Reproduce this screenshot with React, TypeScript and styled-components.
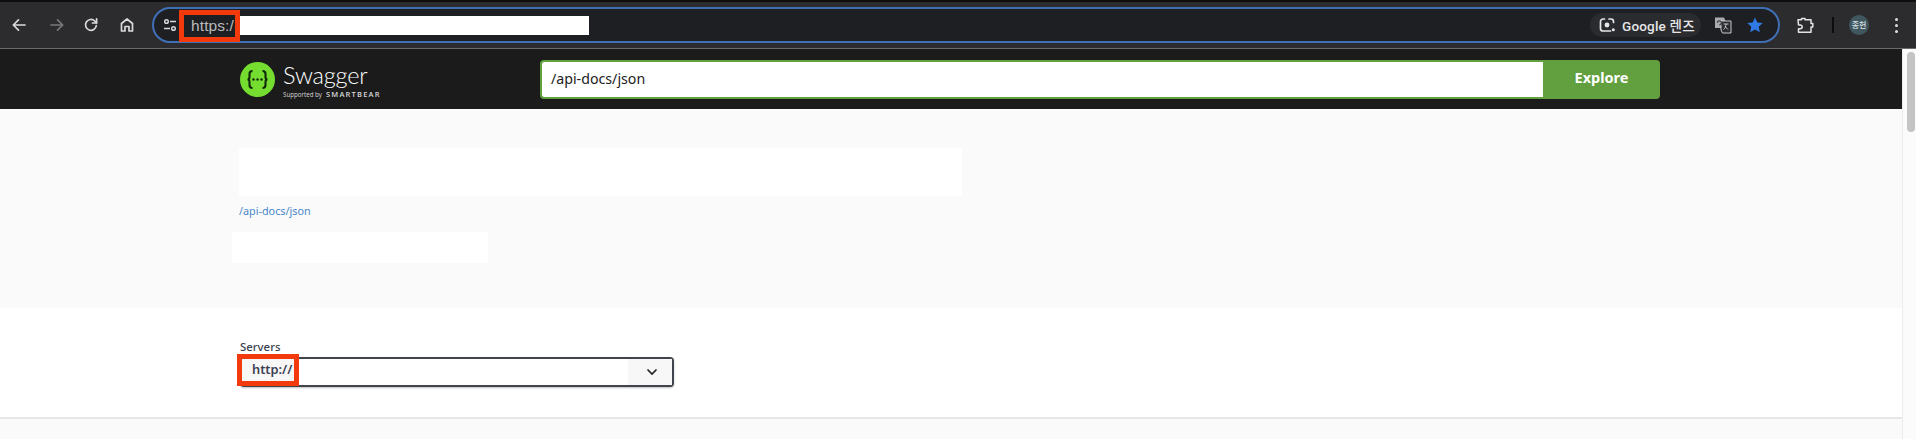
import React from "react";
import styled, {createGlobalStyle} from "styled-components";

const GlobalStyle = createGlobalStyle`
  html, body {
    margin: 0;
    padding: 0;
    width: 1916px;
    height: 439px;
    overflow: hidden;
    background: #fff;
    font-family: "Open Sans", "Liberation Sans", "Noto Sans CJK KR", sans-serif;
  }
`;

const Page = styled.div`
  width: 1916px;
  height: 439px;
  display: flex;
  flex-direction: column;
  overflow: hidden;
`;

const Toolbar = styled.div`
  height: 49px;
  box-sizing: border-box;
  flex: none;
  display: flex;
  align-items: flex-start;
  padding: 7px 0 0 0;
  background: #2c2c2e;
  border-top: 2px solid #0e0e0e;
  border-bottom: 1px solid #6a6a6a;
`;

const NavButton = styled.button<{$dim?: boolean; $width: number}>`
  width: ${(p) => p.$width}px;
  height: 36px;
  margin-top: -2px;
  padding: 0;
  flex: none;
  border: 0;
  background: none;
  display: flex;
  align-items: center;
  justify-content: center;
  color: ${(p) => (p.$dim ? "#77787a" : "#d9dadc")};
`;

const NavGroup = styled.div`
  display: flex;
  width: 152px;
  flex: none;
`;

const Omnibox = styled.div`
  width: 1628px;
  height: 36px;
  margin-top: -2px;
  box-sizing: border-box;
  flex: none;
  display: flex;
  align-items: center;
  border: 2px solid #3f6fb5;
  border-radius: 18px;
  background: #1e1f22;
  padding: 0 7px 0 9px;
`;

const TuneIcon = styled.div`
  width: 16px;
  flex: none;
  display: flex;
  color: #d6d7d9;
`;

const Highlight = styled.div`
  box-sizing: border-box;
  border: 5px solid #f23a0c;
  display: flex;
  align-items: center;
`;

const UrlHighlight = styled(Highlight)`
  width: 61px;
  height: 32px;
  margin-top: 1px;
  flex: none;
  padding-left: 7px;
  color: #b9babc;
  font-family: "Liberation Sans", sans-serif;
  font-size: 15.5px;
  letter-spacing: 0.1px;
  white-space: nowrap;
`;

const UrlMask = styled.div`
  width: 349px;
  height: 19px;
  flex: none;
  background: #fff;
`;

const OmniRight = styled.div`
  margin-left: auto;
  display: flex;
  align-items: center;
`;

const LensPill = styled.div`
  width: 111px;
  height: 24px;
  box-sizing: border-box;
  display: flex;
  align-items: center;
  gap: 7px;
  padding-left: 9px;
  border-radius: 12px;
  background: #2a2b2e;
  color: #e6e6e8;
  font-family: "Roboto", "Noto Sans CJK KR", sans-serif;
  font-size: 13.5px;
  font-weight: 500;
  letter-spacing: 0.2px;
  white-space: nowrap;
`;

const TranslateIcon = styled.div`
  margin-left: 13px;
  width: 18px;
  display: flex;
`;

const StarIcon = styled.div`
  margin-left: 14px;
  margin-right: 7px;
  width: 18px;
  display: flex;
`;

const ToolbarRight = styled.div`
  flex: 1;
  margin-top: -2px;
  height: 36px;
  display: flex;
  align-items: center;
  padding-left: 17px;
  color: #e3e3e5;
`;

const Separator = styled.div`
  width: 2px;
  height: 16px;
  margin: 0 15px 0 18px;
  background: #0c0c0c;
`;

const Avatar = styled.div`
  width: 20px;
  height: 20px;
  border-radius: 50%;
  flex: none;
  background: #40575f;
  color: #dde4e6;
  font-family: "Noto Sans CJK KR", sans-serif;
  font-size: 8px;
  font-weight: 500;
  line-height: 20px;
  text-align: center;
`;

const MenuDots = styled.div`
  margin-left: 26px;
  display: flex;
  flex-direction: column;
  gap: 3px;
  span {
    width: 3px;
    height: 3px;
    border-radius: 50%;
    background: #dedee0;
  }
`;

const Viewport = styled.div`
  flex: 1;
  display: flex;
  min-height: 0;
`;

const Content = styled.div`
  flex: 1;
  min-width: 0;
  display: flex;
  flex-direction: column;
`;

const Scrollbar = styled.div`
  width: 14px;
  flex: none;
  box-sizing: border-box;
  padding: 3px 2px 0 4px;
  background: #fbfbfb;
  border-left: 1px solid #ececec;
`;

const ScrollThumb = styled.div`
  width: 8px;
  height: 80px;
  border-radius: 4px;
  background: #c4c4c4;
`;

const SwaggerBar = styled.div`
  height: 60px;
  flex: none;
  display: flex;
  align-items: center;
  padding-left: 240px;
  background: #1b1b1b;
`;

const Logo = styled.div`
  width: 300px;
  flex: none;
  display: flex;
  align-items: center;
  gap: 8px;
`;

const LogoText = styled.div`
  display: flex;
  flex-direction: column;
  color: #fff;
  height: 40px;
  padding-top: 3px;
  box-sizing: border-box;
`;

const LogoName = styled.div`
  font-family: "Lato", sans-serif;
  font-weight: 300;
  font-size: 23.500px;
  line-height: 26px;
  letter-spacing: -0.2px;
`;

const LogoSub = styled.div`
  display: flex;
  align-items: baseline;
  gap: 4px;
  margin-top: 1px;
  font-size: 6.2px;
  line-height: 10px;
  color: #d8d8d8;
  white-space: nowrap;
`;

const LogoBrand = styled.span`
  font-size: 7.5px;
  font-weight: 600;
  letter-spacing: 1.2px;
`;

const SearchForm = styled.div`
  width: 1120px;
  height: 39px;
  flex: none;
  display: flex;
`;

const SearchInput = styled.div`
  flex: 1;
  box-sizing: border-box;
  display: flex;
  align-items: center;
  padding: 0 0 2px 9px;
  background: #fff;
  border: 2px solid #62a03f;
  border-right: 0;
  border-radius: 4px 0 0 4px;
  color: #1c1c1c;
  font-family: "Noto Sans", sans-serif;
  font-size: 14.2px;
`;

const ExploreButton = styled.button`
  width: 117px;
  flex: none;
  padding: 0 0 5px 0;
  border: 0;
  border-radius: 0 4px 4px 0;
  background: #62a03f;
  color: #fff;
  font-family: "Noto Sans", sans-serif;
  font-size: 14.5px;
  font-weight: 700;
`;

const InfoSection = styled.div`
  height: 199px;
  flex: none;
  box-sizing: border-box;
  padding: 39px 0 0 239px;
  background: #fafafa;
`;

const TitleMask = styled.div`
  width: 723px;
  height: 48px;
  background: #fff;
`;

const SpecLink = styled.a`
  display: block;
  margin-top: 7px;
  color: #4a88c9;
  font-family: "Noto Sans", sans-serif;
  font-size: 10.8px;
  line-height: 16px;
`;

const DescMask = styled.div`
  width: 256px;
  height: 31px;
  margin: 13px 0 0 -7px;
  background: #fff;
`;

const ServersSection = styled.div`
  height: 111px;
  flex: none;
  box-sizing: border-box;
  padding: 32px 0 0 240px;
  background: #fff;
  border-bottom: 2px solid #e6e6e6;
`;

const ServersLabel = styled.div`
  color: #3b4151;
  font-family: "Noto Sans", sans-serif;
  font-size: 11.400px;
  font-weight: 500;
  line-height: 14px;
`;

const ServerSelect = styled.div`
  position: relative;
  width: 434px;
  height: 30px;
  box-sizing: border-box;
  margin-top: 3px;
  display: flex;
  justify-content: flex-end;
  border: 2px solid #41444e;
  border-radius: 4px;
  box-shadow: 0 1px 2px rgba(0, 0, 0, 0.25);
  background: #fff;
`;

const SelectArrow = styled.div`
  width: 44px;
  box-sizing: border-box;
  padding-left: 4px;
  display: flex;
  align-items: center;
  justify-content: center;
  background: #f7f7f7;
  color: #222;
`;

const ServerHighlight = styled(Highlight)`
  position: absolute;
  left: -5px;
  top: -5px;
  width: 62px;
  height: 32px;
  padding: 0 0 2px 10px;
  background: #f7f7f7;
  color: #3b4151;
  font-family: "Noto Sans", sans-serif;
  font-size: 12.800px;
  font-weight: 600;
  white-space: nowrap;
`;

const Rest = styled.div`
  flex: 1;
  background: #fafafa;
`;

const stroke = {
  fill: "none",
  stroke: "currentColor",
  strokeWidth: 1.7,
  strokeLinecap: "round" as const,
  strokeLinejoin: "round" as const,
};

export default function App() {
  return (
    <>
      <GlobalStyle />
      <Page>
        <Toolbar>
          <NavGroup>
            <NavButton $width={38}>
              <svg width="16" height="16" viewBox="0 0 16 16" {...stroke}>
                <path d="M14 8H2.500M7.500 2.800 2.300 8l5.200 5.200" />
              </svg>
            </NavButton>
            <NavButton $dim $width={38}>
              <svg width="16" height="16" viewBox="0 0 16 16" {...stroke}>
                <path d="M2 8h11.500M8.500 2.800 13.700 8l-5.200 5.200" />
              </svg>
            </NavButton>
            <NavButton $width={30}>
              <svg width="16" height="16" viewBox="0 0 16 16" {...stroke}>
                <path d="M13.300 8.500A5.400 5.400 0 1 1 11.700 4L13.500 5.800" />
                <path d="M13.600 1.800v4.200H9.400" />
              </svg>
            </NavButton>
            <NavButton $width={42}>
              <svg width="16" height="16" viewBox="0 0 16 16" {...stroke}>
                <path d="M2.500 14V6.500L8 2l5.500 4.500V14H10V9.500H6V14z" />
              </svg>
            </NavButton>
          </NavGroup>
          <Omnibox>
            <TuneIcon>
              <svg width="14" height="14" viewBox="0 0 14 14" fill="none" stroke="currentColor" strokeWidth="1.5">
                <circle cx="3.500" cy="3.500" r="1.800" />
                <path d="M7 3.500h6M1 10.500h6" />
                <circle cx="10.500" cy="10.500" r="1.800" />
              </svg>
            </TuneIcon>
            <UrlHighlight>https:/</UrlHighlight>
            <UrlMask />
            <OmniRight>
              <LensPill>
                <svg width="16" height="16" viewBox="0 0 16 16" fill="none" stroke="currentColor" strokeWidth="1.7" strokeLinecap="round">
                  <path d="M5.500 2H4a2.500 2.500 0 0 0-2.500 2.500v7A2.500 2.500 0 0 0 4 14h7.500M10 2h2a2.500 2.500 0 0 1 2.500 2.500v1" />
                  <circle cx="8" cy="8" r="1.600" fill="currentColor" />
                  <circle cx="14.300" cy="12.800" r="0.700" fill="currentColor" />
                </svg>
                <span>Google 렌즈</span>
              </LensPill>
              <TranslateIcon>
                <svg width="18" height="18" viewBox="0 0 18 18">
                  <path d="M1 1.500h9l1.500 3.500V12H1z" fill="#a9abae" />
                  <path d="M7 5h10v12H8.500L7 14z" fill="#2a2b2e" stroke="#c9cacc" strokeWidth="1" />
                  <path d="M3.300 6.800a2 2 0 1 1 2 2" fill="none" stroke="#3a3a3c" strokeWidth="1.200" />
                  <path d="M9.500 8h5M12 8c0 2.500-1 4.500-2.500 5.500M11 10.500l3 3" fill="none" stroke="#d3d4d6" strokeWidth="0.900" />
                </svg>
              </TranslateIcon>
              <StarIcon>
                <svg width="18" height="18" viewBox="0 0 18 18">
                  <path d="M9 1.500l2.300 5 5.400.6-4 3.700 1.100 5.400L9 13.500l-4.800 2.700 1.100-5.400-4-3.700 5.400-.6z" fill="#2f7ae5" />
                </svg>
              </StarIcon>
            </OmniRight>
          </Omnibox>
          <ToolbarRight>
            <svg width="17" height="17" viewBox="0 0 17 17" fill="none" stroke="currentColor" strokeWidth="1.500" strokeLinejoin="round">
              <path d="M1 2.800h3.500V1.500h3.500v1.300h6v3.700h1.800v3.500h-1.800v5.200H1.500v-3.500h1.800a1.900 1.900 0 0 0 0-3.800H1.500z" />
            </svg>
            <Separator />
            <Avatar>종헌</Avatar>
            <MenuDots>
              <span />
              <span />
              <span />
            </MenuDots>
          </ToolbarRight>
        </Toolbar>
        <Viewport>
          <Content>
            <SwaggerBar>
              <Logo>
                <svg width="35" height="35" viewBox="0 0 35 35">
                  <circle cx="17.500" cy="17.500" r="17.500" fill="#74dd30" />
                  <path d="M12.500 9c-2.500 0-3 1-3 3v3c0 1.500-.8 2.500-2 2.500 1.200 0 2 1 2 2.500v3c0 2 .5 3 3 3M22.500 9c2.500 0 3 1 3 3v3c0 1.500.8 2.500 2 2.500-1.200 0-2 1-2 2.500v3c0 2-.5 3-3 3" fill="none" stroke="#10280a" strokeWidth="2.100" />
                  <circle cx="13.500" cy="17.500" r="1.200" fill="#10280a" />
                  <circle cx="17.500" cy="17.500" r="1.200" fill="#10280a" />
                  <circle cx="21.500" cy="17.500" r="1.200" fill="#10280a" />
                </svg>
                <LogoText>
                  <LogoName>Swagger</LogoName>
                  <LogoSub>
                    Supported by <LogoBrand>SMARTBEAR</LogoBrand>
                  </LogoSub>
                </LogoText>
              </Logo>
              <SearchForm>
                <SearchInput>/api-docs/json</SearchInput>
                <ExploreButton>Explore</ExploreButton>
              </SearchForm>
            </SwaggerBar>
            <InfoSection>
              <TitleMask />
              <SpecLink>/api-docs/json</SpecLink>
              <DescMask />
            </InfoSection>
            <ServersSection>
              <ServersLabel>Servers</ServersLabel>
              <ServerSelect>
                <ServerHighlight>http://</ServerHighlight>
                <SelectArrow>
                  <svg width="12" height="8" viewBox="0 0 12 8" fill="none" stroke="currentColor" strokeWidth="1.700">
                    <path d="M1.500 1.500 6 6l4.500-4.500" />
                  </svg>
                </SelectArrow>
              </ServerSelect>
            </ServersSection>
            <Rest />
          </Content>
          <Scrollbar>
            <ScrollThumb />
          </Scrollbar>
        </Viewport>
      </Page>
    </>
  );
}
